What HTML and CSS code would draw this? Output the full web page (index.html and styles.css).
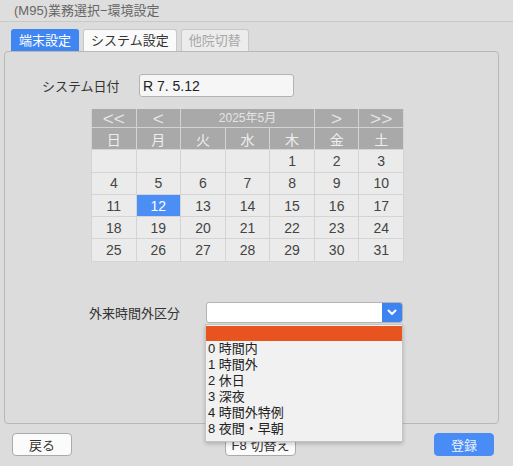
FILE: index.html
```html
<!DOCTYPE html>
<html lang="ja">
<head>
<meta charset="utf-8">
<link rel="stylesheet" href="styles.css">
</head>
<body>
<div class="window">
  <div class="titlebar">(M95)業務選択−環境設定</div>
  <div class="tabs">
    <div class="tab active">端末設定</div>
    <div class="tab">システム設定</div>
    <div class="tab disabled">他院切替</div>
  </div>
  <div class="panel">
    <div class="date-row">
      <span class="label">システム日付</span>
      <div class="textbox">R 7. 5.12</div>
    </div>
    <div class="calendar">
      <div class="nav">&lt;&lt;</div>
      <div class="nav">&lt;</div>
      <div class="nav month">2025年5月</div>
      <div class="nav">&gt;</div>
      <div class="nav">&gt;&gt;</div>
      <div class="wd">日</div><div class="wd">月</div><div class="wd">火</div><div class="wd">水</div><div class="wd">木</div><div class="wd">金</div><div class="wd">土</div>
      <div class="d"></div><div class="d"></div><div class="d"></div><div class="d"></div><div class="d">1</div><div class="d">2</div><div class="d">3</div>
      <div class="d">4</div><div class="d">5</div><div class="d">6</div><div class="d">7</div><div class="d">8</div><div class="d">9</div><div class="d">10</div>
      <div class="d">11</div><div class="d sel">12</div><div class="d">13</div><div class="d">14</div><div class="d">15</div><div class="d">16</div><div class="d">17</div>
      <div class="d">18</div><div class="d">19</div><div class="d">20</div><div class="d">21</div><div class="d">22</div><div class="d">23</div><div class="d">24</div>
      <div class="d">25</div><div class="d">26</div><div class="d">27</div><div class="d">28</div><div class="d">29</div><div class="d">30</div><div class="d">31</div>
    </div>
    <div class="select-row">
      <span class="label">外来時間外区分</span>
      <div class="select-wrap">
        <div class="select">
          <div class="select-value"></div>
          <div class="select-arrow">
            <svg width="10" height="7" viewBox="0 0 10 7"><path d="M1.5 1.5 L5 5 L8.5 1.5" fill="none" stroke="#fff" stroke-width="2" stroke-linecap="round" stroke-linejoin="round"/></svg>
          </div>
        </div>
        <ul class="menu">
          <li class="hl"></li>
          <li>0 時間内</li>
          <li>1 時間外</li>
          <li>2 休日</li>
          <li>3 深夜</li>
          <li>4 時間外特例</li>
          <li>8 夜間・早朝</li>
        </ul>
      </div>
    </div>
  </div>
  <div class="footer">
    <button class="btn">戻る</button>
    <button class="btn f8">F8 切替え</button>
    <button class="btn primary">登録</button>
  </div>
</div>
</body>
</html>
```
FILE: styles.css
```css
* { box-sizing: border-box; }
html, body {
  margin: 0;
  padding: 0;
  background: #dcdcdc;
}
body {
  width: 513px;
  height: 466px;
  overflow: hidden;
  font-family: "Liberation Sans", "Noto Sans CJK JP", sans-serif;
  font-size: 13px;
  color: #333;
}
.window {
  display: flex;
  flex-direction: column;
  height: 466px;
}
.titlebar {
  height: 22px;
  line-height: 21px;
  padding-left: 14px;
  color: #666;
  font-size: 13px;
  border-bottom: 1px solid #c9c9c9;
  background: #dedede;
}
.tabs {
  display: flex;
  gap: 4px;
  padding-left: 11px;
  margin-top: 7px;
  height: 22px;
}
.tab {
  height: 22px;
  line-height: 21px;
  padding: 0 7px;
  background: #fafafa;
  border: 1px solid #c8c8c8;
  border-bottom: none;
  border-radius: 3px 3px 0 0;
  font-size: 13px;
  color: #333;
}
.tab.active {
  background: #3f86f2;
  border-color: #3f86f2;
  color: #fff;
}
.tab.disabled {
  background: #ececec;
  color: #a8a8a8;
}
.panel {
  position: relative;
  margin: 0 14px 0 4px;
  height: 373px;
  border: 1px solid #b8b8b8;
  border-radius: 4px;
  background: #dcdcdc;
}
.date-row {
  display: flex;
  align-items: center;
  margin-top: 22px;
  padding-left: 37px;
}
.label {
  font-size: 13px;
  color: #333;
}
.date-row .label { width: 97px; }
.textbox {
  width: 155px;
  height: 23px;
  line-height: 22px;
  padding-left: 3px;
  background: #f6f6f6;
  border: 1px solid #b4b4b4;
  border-radius: 3px;
  font-size: 14px;
  color: #222;
}
.calendar {
  margin: 12px 0 0 86px;
  width: 313px;
  display: grid;
  grid-template-columns: repeat(7, 1fr);
  grid-template-rows: 18px repeat(6, 21.3px);
  gap: 1px;
  background: #d4d4d4;
  border: 1px solid #d4d4d4;
  border-top: none;
}
.calendar > div {
  display: flex;
  align-items: center;
  justify-content: center;
}
.nav {
  background: #a9a9a9;
  color: #e4e4e4;
  font-size: 19px;
  line-height: 18px;
  padding-top: 1px;
}
.nav.month {
  grid-column: span 3;
  font-size: 12px;
  padding-top: 0;
}
.wd {
  background: #a9a9a9;
  color: #eeeeee;
  font-size: 14px;
}
.d {
  background: #ebebeb;
  color: #444;
  font-size: 14px;
}
.d.sel {
  background: #4b8ff6;
  color: #fff;
}
.select-row {
  display: flex;
  align-items: center;
  margin-top: 40px;
  padding-left: 84px;
}
.select-row .label { width: 117px; }
.select-wrap { position: relative; }
.select {
  display: flex;
  width: 197px;
  height: 21px;
  border: 1px solid #b4b4b4;
  border-radius: 3px;
  background: #fff;
  overflow: hidden;
}
.select-value { flex: 1; }
.select-arrow {
  width: 20px;
  background: #3d84f0;
  display: flex;
  align-items: center;
  justify-content: center;
}
.menu {
  position: absolute;
  left: -1px;
  top: 22px;
  width: 198px;
  margin: 0;
  padding: 1px 0 4px;
  list-style: none;
  background: #f1f1f1;
  border: 1px solid #c4c4c4;
  box-shadow: 0 2px 4px rgba(0,0,0,0.2);
  z-index: 5;
}
.menu li {
  height: 16px;
  line-height: 15px;
  padding-left: 2px;
  font-size: 13px;
  color: #222;
}
.menu li.hl {
  height: 15px;
  background: #e8541f;
}
.footer {
  display: flex;
  align-items: center;
  margin-top: 9px;
  padding: 0 19px 0 12px;
}
.btn {
  height: 23px;
  width: 60px;
  padding: 0;
  border: 1px solid #aaaaaa;
  border-radius: 4px;
  background: #fbfbfb;
  font-family: "Liberation Sans", "Noto Sans CJK JP", sans-serif;
  font-size: 13px;
  color: #333;
}
.btn.f8 {
  width: 71px;
  margin-left: 153px;
}
.btn.primary {
  margin-left: auto;
  background: #4a8cf6;
  border-color: #4a8cf6;
  color: #eef3ff;
}
```
